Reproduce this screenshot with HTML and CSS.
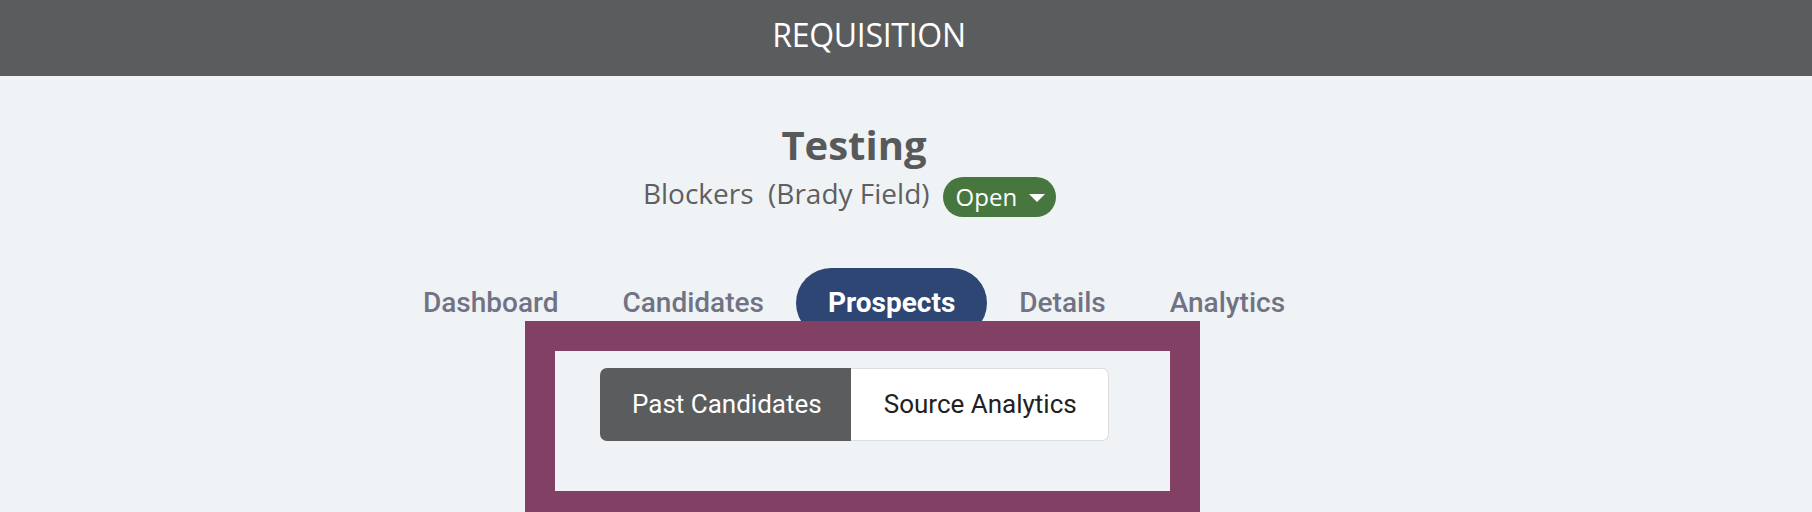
FILE: index.html
```html
<!DOCTYPE html>
<html>
<head>
<meta charset="utf-8">
<link rel="stylesheet" href="styles.css">
</head>
<body>
<header class="topbar"><span class="topbar-title">REQUISITION</span></header>
<main class="page">
  <h1 class="req-title">Testing</h1>
  <div class="req-meta">
    <span class="req-sub">Blockers&nbsp; (Brady Field)</span>
    <span class="status-pill">Open <span class="caret"></span></span>
  </div>
  <nav class="tabs">
    <span class="tab">Dashboard</span>
    <span class="tab">Candidates</span>
    <span class="tab tab-active">Prospects</span>
    <span class="tab">Details</span>
    <span class="tab">Analytics</span>
  </nav>
  <section class="highlight">
    <div class="highlight-inner">
      <div class="btn-group">
        <span class="seg seg-active">Past Candidates</span>
        <span class="seg">Source Analytics</span>
      </div>
    </div>
  </section>
</main>
</body>
</html>
```
FILE: styles.css
```css
html, body {
  margin: 0;
  padding: 0;
}
body {
  background: #eff3f6;
  font-family: "Open Sans", "DejaVu Sans", sans-serif;
  overflow: hidden;
  height: 512px;
}
.topbar {
  height: 76px;
  box-sizing: border-box;
  background: #5b5c5e;
  display: flex;
  align-items: center;
  justify-content: center;
  padding: 0 74px 6px 0;
}
.topbar-title {
  color: #ffffff;
  font-size: 32px;
  font-weight: 400;
  line-height: 40px;
  letter-spacing: -0.3px;
}
.page {
  display: flex;
  flex-direction: column;
  align-items: center;
  padding-right: 104px;
}
.req-title {
  margin: 44px 0 0;
  font-size: 40px;
  line-height: 50px;
  font-weight: 700;
  color: #58595b;
}
.req-meta {
  display: flex;
  align-items: flex-start;
  gap: 13px;
  margin-top: 3px;
  margin-left: -9px;
}
.req-sub {
  font-size: 28px;
  line-height: 40px;
  color: #5e5f61;
}
.status-pill {
  margin-top: 4px;
  height: 40px;
  display: inline-flex;
  align-items: center;
  gap: 12px;
  padding: 0 11px 0 13px;
  background: #47773f;
  color: #ffffff;
  border-radius: 20px;
  font-size: 24px;
  line-height: 40px;
}
.caret {
  width: 0;
  height: 0;
  border-left: 8px solid transparent;
  border-right: 8px solid transparent;
  border-top: 8px solid #ffffff;
  margin-top: 2px;
}
.tabs {
  display: flex;
  margin-top: 51px;
}
.tab {
  font-family: Roboto, "Liberation Sans", sans-serif;
  font-size: 28px;
  font-weight: 500;
  line-height: 70px;
  height: 70px;
  padding: 0 32px;
  color: #717384;
  border-radius: 35px;
}
.tab-active {
  background: #2d4673;
  color: #ffffff;
  font-weight: 700;
}
.highlight {
  margin-top: -17px;
  margin-left: 17px;
  border: 30px solid #814064;
  background: #eff3f6;
}
.highlight-inner {
  width: 570px;
  height: 123px;
  padding: 17px 0 0 45px;
}
.btn-group {
  display: flex;
}
.seg {
  font-family: Roboto, "Liberation Sans", sans-serif;
  font-size: 26px;
  line-height: 71px;
  height: 71px;
  padding: 0 31px 0 33px;
  background: #ffffff;
  color: #212121;
  border: 1px solid #dcdde0;
  border-left: none;
  border-radius: 0 7px 7px 0;
}
.seg-active {
  background: #5b5c5e;
  color: #ffffff;
  border: none;
  line-height: 73px;
  height: 73px;
  padding: 0 29px 0 32px;
  border-radius: 7px 0 0 7px;
}
```
